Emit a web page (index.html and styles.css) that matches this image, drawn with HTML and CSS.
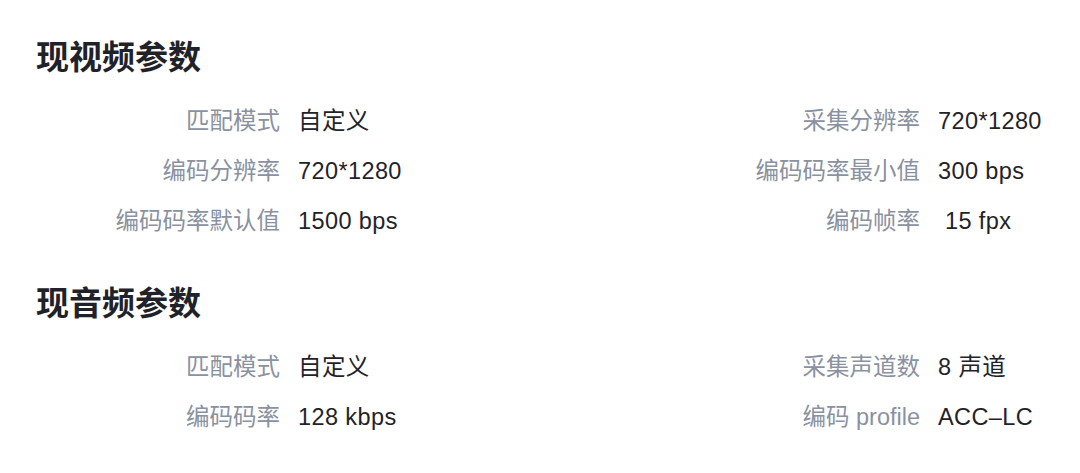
FILE: index.html
```html
<!DOCTYPE html>
<html lang="zh-CN">
<head>
<meta charset="utf-8">
<link rel="stylesheet" href="styles.css">
</head>
<body>
<div class="page">
  <section class="section">
    <h2 class="title">现视频参数</h2>
    <div class="grid">
      <div class="label">匹配模式</div><div class="value">自定义</div>
      <div class="label">采集分辨率</div><div class="value">720*1280</div>
      <div class="label">编码分辨率</div><div class="value">720*1280</div>
      <div class="label">编码码率最小值</div><div class="value">300 bps</div>
      <div class="label">编码码率默认值</div><div class="value">1500 bps</div>
      <div class="label">编码帧率</div><div class="value">&nbsp;15 fpx</div>
    </div>
  </section>
  <section class="section">
    <h2 class="title">现音频参数</h2>
    <div class="grid">
      <div class="label">匹配模式</div><div class="value">自定义</div>
      <div class="label">采集声道数</div><div class="value">8 声道</div>
      <div class="label">编码码率</div><div class="value">128 kbps</div>
      <div class="label">编码 profile</div><div class="value">ACC–LC</div>
    </div>
  </section>
</div>
</body>
</html>
```
FILE: styles.css
```css
html, body {
  margin: 0;
  padding: 0;
  background: #ffffff;
}
.page {
  padding: 36px 0 0 36px;
  font-family: "Liberation Sans", "Noto Sans CJK SC", sans-serif;
}
.section {
  margin-bottom: 36px;
}
.title {
  margin: 0 0 16px 0;
  font-size: 33px;
  line-height: 44px;
  font-weight: 700;
  color: #1f2329;
}
.grid {
  display: grid;
  grid-template-columns: 244px 382px 222px auto;
  column-gap: 18px;
  grid-auto-rows: 50px;
}
.label {
  text-align: right;
  color: #8a919f;
  font-size: 23.5px;
  line-height: 50px;
  white-space: nowrap;
}
.value {
  color: #1f2329;
  font-size: 23.5px;
  letter-spacing: 0.4px;
  line-height: 50px;
  white-space: nowrap;
}
```
